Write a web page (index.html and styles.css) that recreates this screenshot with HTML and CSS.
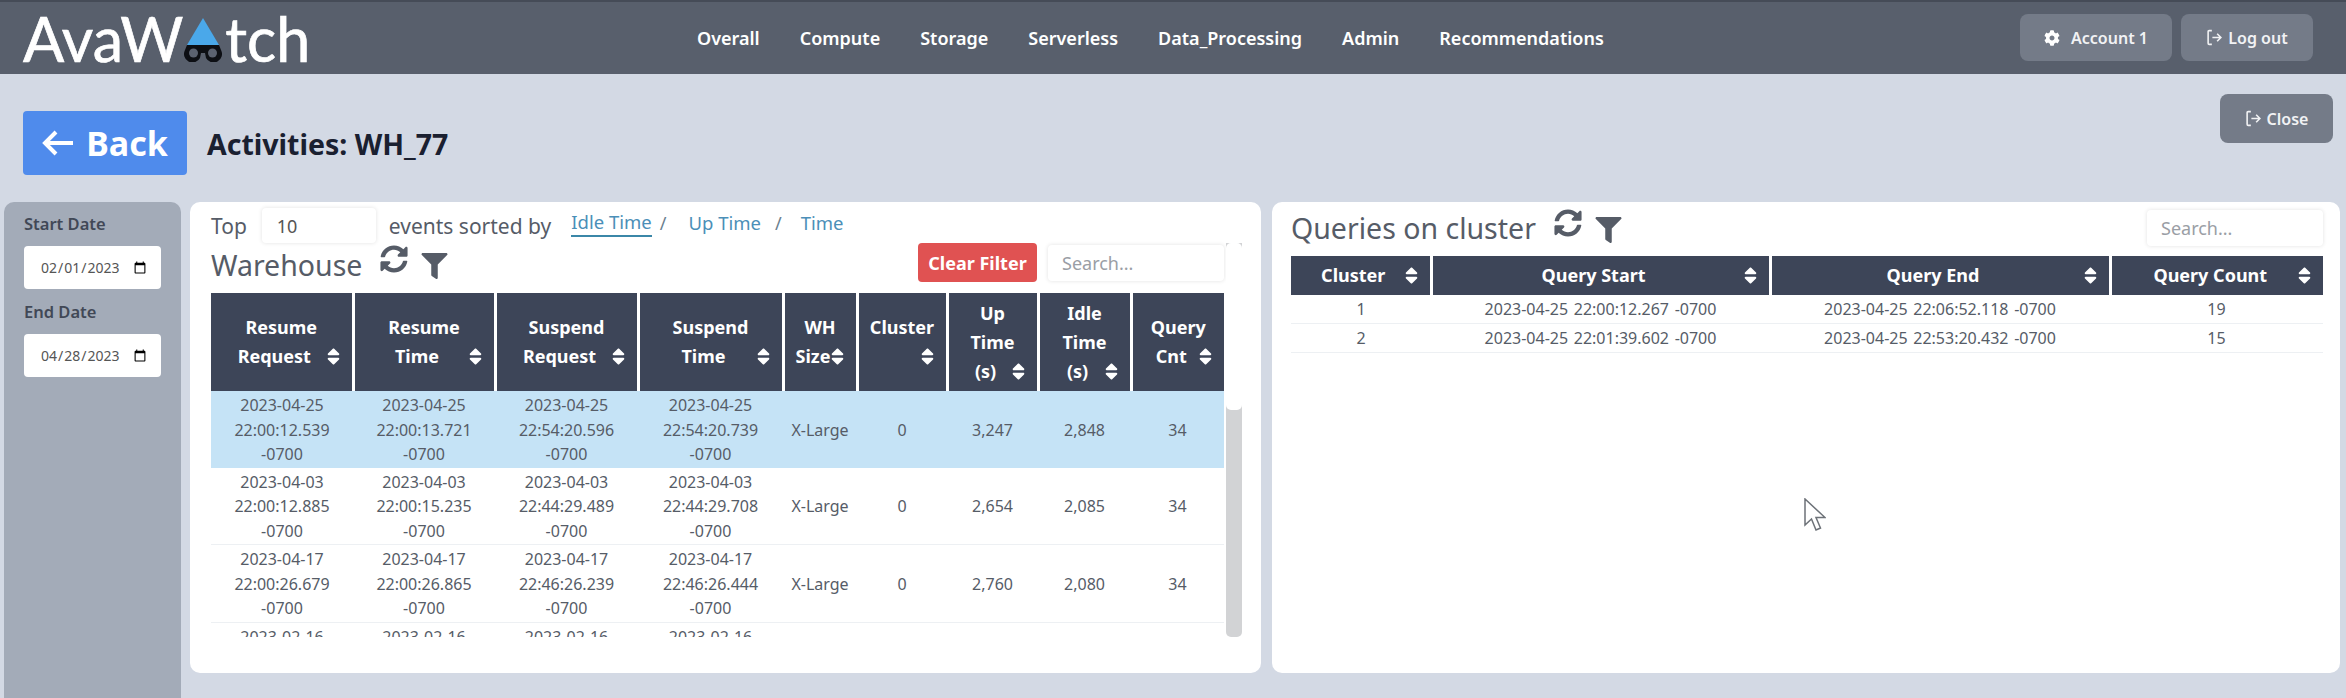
FILE: index.html
```html
<!DOCTYPE html>
<html lang="en">
<head>
    <meta charset="UTF-8">
    <meta name="viewport" content="width=device-width, initial-scale=1.0">
    <title>AvaWatch - Activities</title>
    <link rel="stylesheet" href="styles.css">
</head>
<body>

<svg class="icon-defs" aria-hidden="true">
    <symbol id="i-sort" viewBox="0 0 320 512"><path d="M41 288h238c21.4 0 32.1 25.9 17 41L177 448c-9.4 9.4-24.6 9.4-33.9 0L24 329c-15.1-15.1-4.4-41 17-41zm255-105L177 64c-9.4-9.4-24.6-9.4-33.9 0L24 183c-15.1 15.1-4.4 41 17 41h238c21.4 0 32.1-25.9 17-41z"/></symbol>
    <symbol id="i-refresh" viewBox="0 0 512 512"><path d="M370.72 133.28C339.458 104.008 298.888 87.962 255.848 88c-77.458.068-144.328 53.178-162.791 126.85-1.344 5.363-6.122 9.15-11.651 9.15H24.103c-7.498 0-13.194-6.807-11.807-14.176C33.933 94.924 134.813 8 256 8c66.448 0 126.791 26.136 171.315 68.685L463.03 40.97C478.149 25.851 504 36.559 504 57.941V192c0 13.255-10.745 24-24 24H345.941c-21.382 0-32.09-25.851-16.971-40.971l41.75-41.749zM32 296h134.059c21.382 0 32.09 25.851 16.971 40.971l-41.75 41.75c31.262 29.273 71.835 45.319 114.876 45.28 77.418-.07 144.315-53.144 162.787-126.849 1.344-5.363 6.122-9.15 11.651-9.15h57.304c7.498 0 13.194 6.807 11.807 14.176C478.067 417.076 377.187 504 256 504c-66.448 0-126.791-26.136-171.315-68.685L48.97 471.03C33.851 486.149 8 475.441 8 454.059V320c0-13.255 10.745-24 24-24z"/></symbol>
    <symbol id="i-filter" viewBox="0 0 512 512"><path d="M487.976 0H24.028C2.71 0-8.047 25.866 7.058 40.971L192 225.941V432c0 7.831 3.821 15.17 10.237 19.662l80 55.98C298.02 518.69 320 507.493 320 487.98V225.941l184.947-184.97C520.021 25.896 509.338 0 487.976 0z"/></symbol>
    <symbol id="i-cog" viewBox="0 0 512 512"><path d="M487.4 315.7l-42.6-24.6c4.3-23.2 4.3-47 0-70.2l42.6-24.6c4.9-2.8 7.1-8.6 5.5-14-11.1-35.6-30-67.8-54.7-94.6-3.8-4.1-10-5.1-14.8-2.3L380.8 110c-17.9-15.4-38.5-27.3-60.8-35.1V25.8c0-5.6-3.9-10.5-9.4-11.7-36.7-8.2-74.3-7.8-109.2 0-5.5 1.2-9.4 6.1-9.4 11.7V75c-22.2 7.9-42.8 19.8-60.8 35.1L88.7 85.5c-4.9-2.8-11-1.9-14.8 2.3-24.7 26.7-43.6 58.9-54.7 94.6-1.7 5.4.6 11.2 5.5 14L67.3 221c-4.3 23.2-4.3 47 0 70.2l-42.6 24.6c-4.9 2.8-7.1 8.6-5.5 14 11.1 35.6 30 67.8 54.7 94.6 3.8 4.1 10 5.1 14.8 2.3l42.6-24.6c17.9 15.4 38.5 27.3 60.8 35.1v49.2c0 5.6 3.9 10.5 9.4 11.7 36.7 8.2 74.3 7.8 109.2 0 5.5-1.2 9.4-6.1 9.4-11.7v-49.2c22.2-7.9 42.8-19.8 60.8-35.1l42.6 24.6c4.9 2.8 11 1.9 14.8-2.3 24.7-26.7 43.6-58.9 54.7-94.6 1.5-5.5-.7-11.3-5.6-14.1zM256 336c-44.1 0-80-35.9-80-80s35.9-80 80-80 80 35.9 80 80-35.9 80-80 80z"/></symbol>
    <symbol id="i-exit" viewBox="0 0 16 16"><path d="M5.5 1.5H3a1 1 0 0 0-1 1v11a1 1 0 0 0 1 1h2.500M6 8h8M10.500 4.500 14 8l-3.500 3.500" fill="none" stroke="currentColor" stroke-width="1.500"/></symbol>
</svg>

<header class="navbar">
    <a href="#" class="logo">AvaW<svg class="logo-mark" viewBox="0 0 38 44" aria-hidden="true">
        <path d="M19 0 35 27H3z" fill="#4aa8ea"/>
        <path d="M3 27h32l2 5a8 8 0 0 1-15 8l-1-5h-4l-1 5a8 8 0 0 1-15-8z" fill="#0d0f14"/>
        <circle cx="9.500" cy="35" r="4.500" fill="#5b6270"/>
        <circle cx="28.500" cy="35" r="4.500" fill="#5b6270"/>
    </svg>tch</a>
    <nav class="nav-links">
        <a href="#">Overall</a>
        <a href="#">Compute</a>
        <a href="#">Storage</a>
        <a href="#">Serverless</a>
        <a href="#">Data_Processing</a>
        <a href="#">Admin</a>
        <a href="#">Recommendations</a>
    </nav>
    <div class="nav-actions">
        <button class="btn-grey btn-account"><svg class="icon-cog"><use href="#i-cog"/></svg>Account 1</button>
        <button class="btn-grey btn-logout"><svg class="icon-exit"><use href="#i-exit"/></svg>Log out</button>
    </div>
</header>

<div class="title-row">
    <button class="btn-back"><svg class="icon-back" viewBox="0 0 32 28" aria-hidden="true"><path d="M14 3 3 14l11 11M3 14h28" fill="none" stroke="currentColor" stroke-width="4"/></svg>Back</button>
    <h1 class="page-title">Activities: WH_77</h1>
    <button class="btn-grey btn-close"><svg class="icon-exit"><use href="#i-exit"/></svg>Close</button>
</div>

<div class="content">
    <aside class="sidebar">
        <label for="start-date">Start Date</label>
        <input type="date" id="start-date" value="2023-02-01">
        <label for="end-date">End Date</label>
        <input type="date" id="end-date" value="2023-04-28">
    </aside>

    <section class="card card-left">
        <div class="sort-row">
            <span>Top</span>
            <input type="text" class="top-input" value="10">
            <span>events sorted by</span>
            <a href="#" class="sort-link active">Idle Time</a>
            <span class="sort-sep">/</span>
            <a href="#" class="sort-link">Up Time</a>
            <span class="sort-sep">/</span>
            <a href="#" class="sort-link">Time</a>
        </div>
        <div class="panel-body">
            <div class="panel-main">
                <div class="toolbar">
                    <h2 class="panel-title">Warehouse</h2>
                    <svg class="icon-refresh"><use href="#i-refresh"/></svg>
                    <svg class="icon-filter"><use href="#i-filter"/></svg>
                    <button class="btn-clear">Clear Filter</button>
                    <input type="text" class="search-input" placeholder="Search...">
                </div>
                <div class="table-clip">
                    <table class="data-table wh-table">
                        <colgroup>
                            <col class="c142"><col class="c142"><col class="c143"><col class="c145"><col class="c74"><col class="c90"><col class="c91"><col class="c93"><col class="c93">
                        </colgroup>
                        <thead>
                            <tr>
                                <th>Resume<br>Request<i class="sort-gap"></i><svg class="icon-sort"><use href="#i-sort"/></svg></th>
                                <th>Resume<br>Time<i class="sort-gap"></i><svg class="icon-sort"><use href="#i-sort"/></svg></th>
                                <th>Suspend<br>Request<i class="sort-gap"></i><svg class="icon-sort"><use href="#i-sort"/></svg></th>
                                <th>Suspend<br>Time<i class="sort-gap"></i><svg class="icon-sort"><use href="#i-sort"/></svg></th>
                                <th>WH<br>Size<i class="sort-gap"></i><svg class="icon-sort"><use href="#i-sort"/></svg></th>
                                <th>Cluster<br>&nbsp;<svg class="icon-sort"><use href="#i-sort"/></svg></th>
                                <th>Up<br>Time<br>(s)<i class="sort-gap"></i><svg class="icon-sort"><use href="#i-sort"/></svg></th>
                                <th>Idle<br>Time<br>(s)<i class="sort-gap"></i><svg class="icon-sort"><use href="#i-sort"/></svg></th>
                                <th>Query<br>Cnt<i class="sort-gap"></i><svg class="icon-sort"><use href="#i-sort"/></svg></th>
                            </tr>
                        </thead>
                        <tbody>
                            <tr class="selected">
                                <td>2023-04-25 22:00:12.539 -0700</td>
                                <td>2023-04-25 22:00:13.721 -0700</td>
                                <td>2023-04-25 22:54:20.596 -0700</td>
                                <td>2023-04-25 22:54:20.739 -0700</td>
                                <td>X-Large</td><td>0</td><td>3,247</td><td>2,848</td><td>34</td>
                            </tr>
                            <tr>
                                <td>2023-04-03 22:00:12.885 -0700</td>
                                <td>2023-04-03 22:00:15.235 -0700</td>
                                <td>2023-04-03 22:44:29.489 -0700</td>
                                <td>2023-04-03 22:44:29.708 -0700</td>
                                <td>X-Large</td><td>0</td><td>2,654</td><td>2,085</td><td>34</td>
                            </tr>
                            <tr>
                                <td>2023-04-17 22:00:26.679 -0700</td>
                                <td>2023-04-17 22:00:26.865 -0700</td>
                                <td>2023-04-17 22:46:26.239 -0700</td>
                                <td>2023-04-17 22:46:26.444 -0700</td>
                                <td>X-Large</td><td>0</td><td>2,760</td><td>2,080</td><td>34</td>
                            </tr>
                            <tr>
                                <td>2023-02-16</td><td>2023-02-16</td><td>2023-02-16</td><td>2023-02-16</td>
                                <td></td><td></td><td></td><td></td><td></td>
                            </tr>
                        </tbody>
                    </table>
                </div>
            </div>
            <div class="scrollbar"><div class="scrollbar-thumb"></div></div>
        </div>
    </section>

    <section class="card card-right">
        <div class="toolbar toolbar-right">
            <h2 class="panel-title">Queries on cluster</h2>
            <svg class="icon-refresh"><use href="#i-refresh"/></svg>
            <svg class="icon-filter"><use href="#i-filter"/></svg>
            <input type="text" class="search-input" placeholder="Search...">
        </div>
        <table class="data-table query-table">
            <colgroup>
                <col class="c140"><col class="c339"><col class="c340"><col class="c213">
            </colgroup>
            <thead>
                <tr>
                    <th>Cluster<i class="sort-gap"></i><svg class="icon-sort"><use href="#i-sort"/></svg></th>
                    <th>Query Start<i class="sort-gap"></i><svg class="icon-sort"><use href="#i-sort"/></svg></th>
                    <th>Query End<i class="sort-gap"></i><svg class="icon-sort"><use href="#i-sort"/></svg></th>
                    <th>Query Count<i class="sort-gap"></i><svg class="icon-sort"><use href="#i-sort"/></svg></th>
                </tr>
            </thead>
            <tbody>
                <tr><td>1</td><td>2023-04-25 22:00:12.267 -0700</td><td>2023-04-25 22:06:52.118 -0700</td><td>19</td></tr>
                <tr><td>2</td><td>2023-04-25 22:01:39.602 -0700</td><td>2023-04-25 22:53:20.432 -0700</td><td>15</td></tr>
            </tbody>
        </table>
    </section>
</div>

<svg class="cursor" viewBox="0 0 22 33" aria-hidden="true"><path d="M1 1v26l6.500-6 4.500 11 4.500-2-4.500-10.500H21z" fill="#fff" stroke="#6d7278" stroke-width="1.500"/></svg>

</body>
</html>
```

FILE: styles.css
```css
* {
    box-sizing: border-box;
}
html, body {
    height: 100%;
}
body {
    margin: 0;
    background-color: #d3d9e4;
    font-family: "Noto Sans", Arial, sans-serif;
    color: #565c67;
    overflow: hidden;
    position: relative;
}
.icon-defs {
    display: none;
}
button {
    font-family: inherit;
    border: none;
    cursor: pointer;
}

/* top bar */
.navbar {
    display: flex;
    align-items: center;
    height: 74px;
    background-color: #585f6c;
    border-top: 2px solid #454b57;
    padding-left: 23px;
}
.logo {
    display: flex;
    align-items: center;
    width: 674px;
    height: 60px;
    font-family: Lato, sans-serif;
    font-size: 61px;
    color: white;
    -webkit-text-stroke: 0.7px white;
    text-decoration: none;
}
.logo-mark {
    width: 38px;
    height: 44px;
    margin: 4px 3px 0 1px;
}
.nav-links {
    display: flex;
    gap: 40px;
}
.nav-links a {
    color: white;
    font-size: 18px;
    font-weight: 600;
    text-decoration: none;
}
.nav-actions {
    display: flex;
    gap: 9px;
    margin-left: auto;
    margin-right: 33px;
    margin-top: -1px;
}
.btn-grey {
    display: flex;
    align-items: center;
    justify-content: center;
    height: 47px;
    background-color: #747b88;
    color: #f1f2f4;
    font-size: 16px;
    font-weight: 600;
    border-radius: 8px;
}
.btn-account {
    width: 152px;
}
.btn-logout {
    width: 132px;
}
.icon-cog {
    width: 16px;
    height: 16px;
    fill: white;
    margin-right: 11px;
}
.icon-exit {
    width: 17px;
    height: 17px;
    margin-right: 5px;
}

/* page title */
.title-row {
    display: flex;
    align-items: flex-start;
    height: 128px;
    padding: 37px 13px 0 23px;
}
.btn-back {
    display: flex;
    align-items: center;
    justify-content: center;
    width: 164px;
    height: 64px;
    background-color: #4f8bec;
    color: white;
    font-size: 34px;
    font-weight: 700;
    border-radius: 4px;
}
.icon-back {
    width: 32px;
    height: 28px;
    margin-right: 12px;
}
.page-title {
    margin: 1px 0 0 20px;
    align-self: flex-start;
    font-size: 28.500px;
    font-weight: 700;
    line-height: 64px;
    color: #1a2030;
}
.btn-close {
    width: 113px;
    height: 49px;
    margin-left: auto;
    margin-top: -17px;
}

/* main area */
.content {
    display: flex;
    align-items: flex-start;
    padding-left: 4px;
}
.sidebar {
    display: flex;
    flex-direction: column;
    width: 177px;
    height: 496px;
    padding: 12px 20px 0;
    background-color: #a3abb8;
    border-radius: 10px 10px 0 0;
}
.sidebar label {
    font-size: 16.500px;
    font-weight: 600;
    line-height: 20px;
    color: #414856;
}
.sidebar input {
    width: 137px;
    height: 43px;
    margin: 12px 0 13px;
    padding: 0 12px 0 16px;
    border: none;
    border-radius: 4px;
    background: white;
    font-family: inherit;
    font-size: 14px;
    color: #555;
}
.card {
    height: 471px;
    background-color: white;
    border-radius: 10px;
}
.card-left {
    width: 1071px;
    margin-left: 9px;
    padding: 6px 0 0 21px;
}
.card-right {
    width: 1068px;
    margin-left: 11px;
    padding: 6px 17px 0 19px;
}

/* sort row */
.sort-row {
    display: flex;
    align-items: center;
    height: 35px;
    font-size: 21px;
}
.top-input {
    width: 114px;
    height: 35px;
    margin: 0 13px 0 15px;
    padding: 0 15px;
    border: none;
    border-radius: 4px;
    box-shadow: 0 0 4px rgba(0,0,0,0.12);
    font-family: inherit;
    font-size: 18px;
    color: #555;
}
.sort-link {
    margin-left: 16px;
    color: #4b8fb8;
    font-size: 18.500px;
    text-decoration: none;
    margin-top: -5px;
    padding-bottom: 1px;
}
.sort-link.active {
    margin-left: 20px;
    border-bottom: 2px solid #3b87a8;
}
.sort-link:last-child {
    margin-left: 13px;
}
.sort-sep {
    margin-left: 14px;
    margin-right: 6px;
    color: #6b7f8f;
    font-size: 18px;
    margin-top: -5px;
}
.active + .sort-sep {
    margin-left: 8px;
}

/* panel */
.panel-body {
    display: flex;
}
.panel-main {
    width: 1013px;
}
.toolbar {
    display: flex;
    align-items: center;
    height: 50px;
}
.toolbar-right {
    height: 48px;
}
.panel-title {
    margin: 0;
    font-size: 28.500px;
    font-weight: 400;
    color: #565c67;
    padding-bottom: 6px;
}
.toolbar-right .panel-title {
    padding-bottom: 9px;
}
.icon-refresh {
    width: 28px;
    height: 28px;
    margin-left: 18px;
    margin-top: -19px;
    fill: #565c67;
}
.icon-filter {
    width: 29px;
    height: 26px;
    margin-left: 12px;
    margin-top: -4px;
    fill: #565c67;
}
.btn-clear {
    width: 119px;
    height: 39px;
    margin-left: auto;
    margin-top: -11px;
    background-color: #e05252;
    color: white;
    font-size: 18px;
    font-weight: 700;
    border-radius: 4px;
}
.search-input {
    width: 176px;
    height: 36px;
    margin-left: 11px;
    margin-top: -11px;
    padding: 0 14px;
    border: none;
    border-radius: 4px;
    box-shadow: 0 0 4px rgba(0,0,0,0.12);
    font-family: inherit;
    font-size: 18px;
}
.search-input::placeholder {
    color: #9a9ea5;
}
.toolbar-right .search-input {
    margin-left: auto;
    margin-top: -8px;
}
.scrollbar {
    width: 16px;
    height: 394px;
    margin-left: 2px;
    background-color: #d2d3d5;
    border-radius: 0 0 5px 5px;
}
.scrollbar-thumb {
    height: 167px;
    background-color: white;
    border-radius: 5px;
}

/* tables */
.table-clip {
    height: 344px;
    overflow: hidden;
}
.data-table {
    width: 100%;
    table-layout: fixed;
    border-collapse: collapse;
}
.data-table th {
    position: relative;
    background-color: #3d4558;
    color: white;
    font-size: 18px;
    font-weight: 700;
    line-height: 29px;
    padding: 0;
    border-right: 3px solid white;
    text-align: center;
}
.data-table th:last-child {
    border-right: none;
}
.wh-table th {
    height: 98px;
}
.query-table th {
    height: 39px;
}
.data-table td {
    padding: 2px 0 1px;
    font-size: 16px;
    line-height: 24.5px;
    text-align: center;
    color: #565c67;
    border-bottom: 1px solid #edf0f3;
    white-space: nowrap;
}
.wh-table td:nth-child(-n+4) {
    padding-left: 18px;
    padding-right: 18px;
    white-space: normal;
}
.selected td {
    background-color: #c5e3f6;
    border-bottom: none;
}
.query-table td {
    padding: 1px 0;
    line-height: 26px;
    word-spacing: 1.500px;
}
.sort-gap {
    display: inline-block;
    width: 14px;
}
.icon-sort {
    position: absolute;
    right: 12px;
    width: 13px;
    height: 21px;
    margin-top: 4px;
    fill: white;
}
.c74 { width: 74px; }
.c90 { width: 90px; }
.c91 { width: 91px; }
.c93 { width: 93px; }
.c140 { width: 140px; }
.c142 { width: 142px; }
.c143 { width: 143px; }
.c145 { width: 145px; }
.c213 { width: 213px; }
.c339 { width: 339px; }
.c340 { width: 340px; }

/* mouse pointer caught in the screen recording */
.cursor {
    position: absolute;
    left: 1804px;
    top: 498px;
    width: 22px;
    height: 33px;
}
```
